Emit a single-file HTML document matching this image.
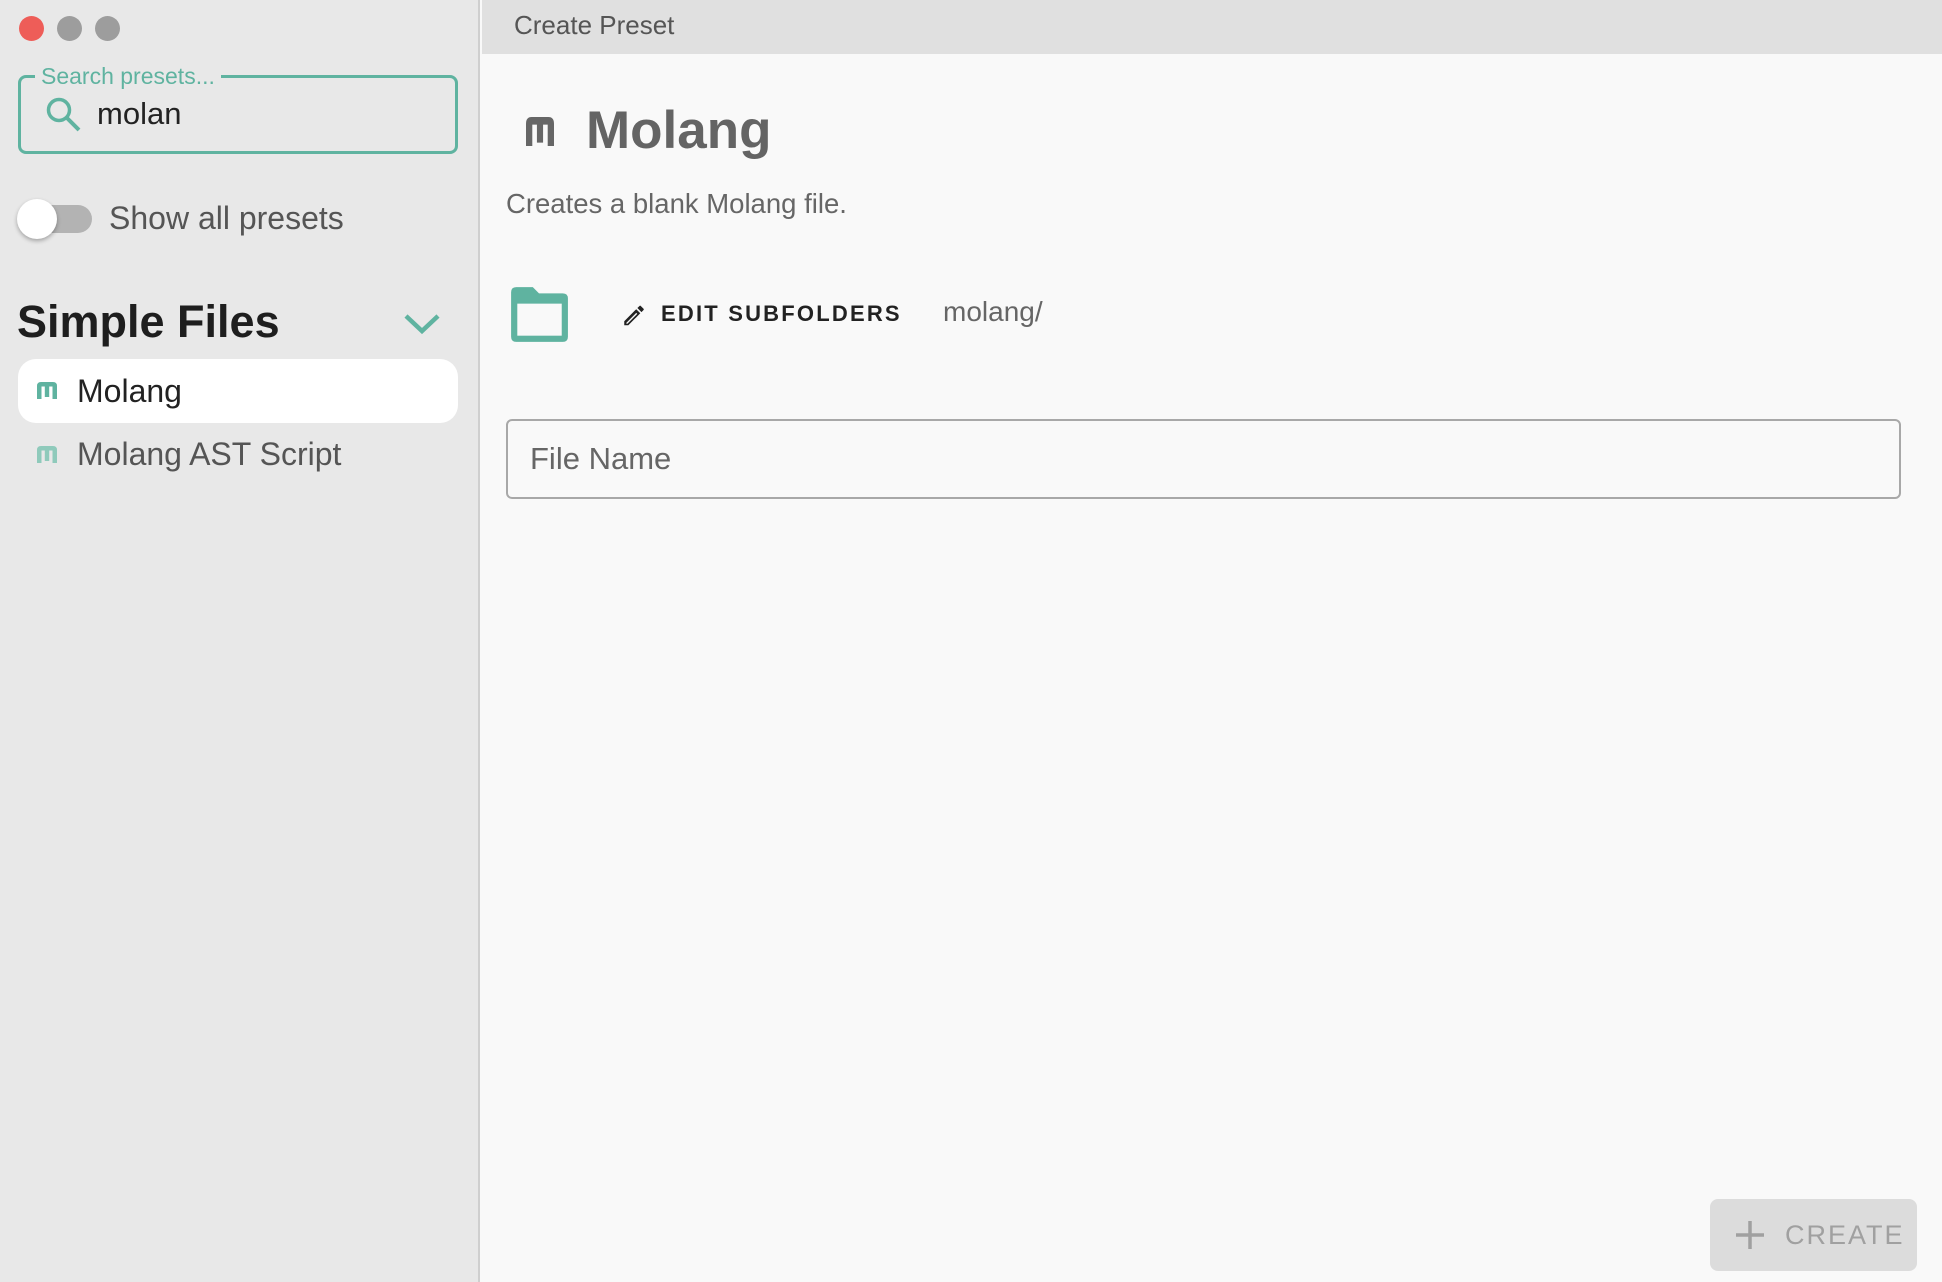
<!DOCTYPE html>
<html><head><meta charset="utf-8"><style>
*{margin:0;padding:0;box-sizing:border-box}
body{width:1942px;height:1282px;overflow:hidden;font-family:"Liberation Sans",sans-serif;background:#f9f9f9;position:relative}
.side{position:absolute;left:0;top:0;width:480px;height:1282px;background:#e8e8e8;border-right:2px solid #cfcfcf}
.abs{position:absolute;white-space:nowrap}
.dot{position:absolute;top:16px;width:25px;height:25px;border-radius:50%;background:#9d9d9d}
.hdr{position:absolute;left:482px;top:0;right:0;height:54px;background:#e0e0e0}
</style></head><body>
<div class="side">
 <div class="dot" style="left:19px;background:#ee5d58"></div>
 <div class="dot" style="left:57px"></div>
 <div class="dot" style="left:95px"></div>
 <div class="abs" style="left:18px;top:75px;width:440px;height:79px;border:3px solid #5fb3a0;border-radius:8px"></div>
 <div class="abs" style="left:35px;top:63px;padding:0 6px;background:#e8e8e8;color:#5fb3a0;font-size:23px">Search presets...</div>
 <svg class="abs" style="left:44px;top:95px" width="40" height="40" viewBox="0 0 40 40"><circle cx="15" cy="15" r="10.5" fill="none" stroke="#5fb3a0" stroke-width="3.5"/><path d="M22.5 22.5 L35 35" stroke="#5fb3a0" stroke-width="4"/></svg>
 <div class="abs" style="left:97px;top:96px;font-size:31px;color:#222">molan</div>
 <div class="abs" style="left:18px;top:205px;width:74px;height:28px;border-radius:14px;background:#b3b3b3"></div>
 <div class="abs" style="left:17px;top:199px;width:40px;height:40px;border-radius:50%;background:#fff;box-shadow:0 2px 4px rgba(0,0,0,.3)"></div>
 <div class="abs" style="left:109px;top:200px;font-size:32px;color:#555">Show all presets</div>
 <div class="abs" style="left:17px;top:296px;font-size:45px;font-weight:bold;color:#1e1e1e">Simple Files</div>
 <svg class="abs" style="left:403px;top:310px" width="38" height="28" viewBox="0 0 38 28"><path d="M3 6 L19 21 L35 6" fill="none" stroke="#5fb3a0" stroke-width="4.5"/></svg>
 <div class="abs" style="left:18px;top:359px;width:440px;height:64px;background:#fff;border-radius:18px"></div>
 <svg class="abs" style="left:37px;top:382px" width="20" height="17" viewBox="0 0 20 17"><path d="M0 17V4Q0 0 4 0H16Q20 0 20 4V17H15.5V4.5H12.2V15H7.8V4.5H4.5V17Z" fill="#5fb3a0"/></svg>
 <div class="abs" style="left:77px;top:373px;font-size:32px;color:#222">Molang</div>
 <svg class="abs" style="left:37px;top:446px" width="20" height="17" viewBox="0 0 20 17"><path d="M0 17V4Q0 0 4 0H16Q20 0 20 4V17H15.5V4.5H12.2V15H7.8V4.5H4.5V17Z" fill="#8fcabb"/></svg>
 <div class="abs" style="left:77px;top:436px;font-size:32px;color:#555">Molang AST Script</div>
</div>
<div class="hdr"><div class="abs" style="left:32px;top:10px;font-size:26px;color:#555">Create Preset</div></div>
<svg class="abs" style="left:526px;top:117px" width="28" height="29" viewBox="0 0 20 17" preserveAspectRatio="none"><path d="M0 17V4Q0 0 4 0H16Q20 0 20 4V17H15.5V4.5H12.2V15H7.8V4.5H4.5V17Z" fill="#666"/></svg>
<div class="abs" style="left:586px;top:100px;font-size:53px;font-weight:bold;color:#646464">Molang</div>
<div class="abs" style="left:506px;top:188px;font-size:27.5px;color:#666">Creates a blank Molang file.</div>
<svg class="abs" style="left:508px;top:286px" width="62" height="57" viewBox="0 0 60 55"><path d="M3 6 Q3 1 8 1 H24 L30 7 H53 Q58 7 58 12 V49 Q58 54 53 54 H8 Q3 54 3 49 Z" fill="#5fb3a0"/><rect x="9" y="17" width="43" height="31" fill="#f9f9f9"/></svg>
<svg class="abs" style="left:621px;top:302px" width="26" height="27" viewBox="0 0 24 24"><path d="M3 17.25V21h3.75L17.81 9.94l-3.75-3.75L3 17.25zm2.92 2.33H5v-.92l9.06-9.06.92.92L5.92 19.58zM20.71 7.04a1 1 0 000-1.41l-2.34-2.34a1 1 0 00-1.41 0l-1.83 1.83 3.75 3.75 1.83-1.83z" fill="#222"/></svg>
<div class="abs" style="left:661px;top:301px;font-size:22px;font-weight:bold;letter-spacing:2.2px;color:#222">EDIT SUBFOLDERS</div>
<div class="abs" style="left:943px;top:296px;font-size:28px;color:#666">molang/</div>
<div class="abs" style="left:506px;top:419px;width:1395px;height:80px;border:2px solid #a8a8a8;border-radius:6px"></div>
<div class="abs" style="left:530px;top:441px;font-size:31px;color:#666">File Name</div>
<div class="abs" style="left:1710px;top:1199px;width:207px;height:72px;background:#dcdcdc;border-radius:8px"></div>
<svg class="abs" style="left:1735px;top:1220px" width="30" height="30" viewBox="0 0 30 30"><path d="M15 1V29M1 15H29" stroke="#a0a0a0" stroke-width="3.5"/></svg>
<div class="abs" style="left:1785px;top:1220px;font-size:27px;letter-spacing:2px;color:#a0a0a0">CREATE</div>
</body></html>
